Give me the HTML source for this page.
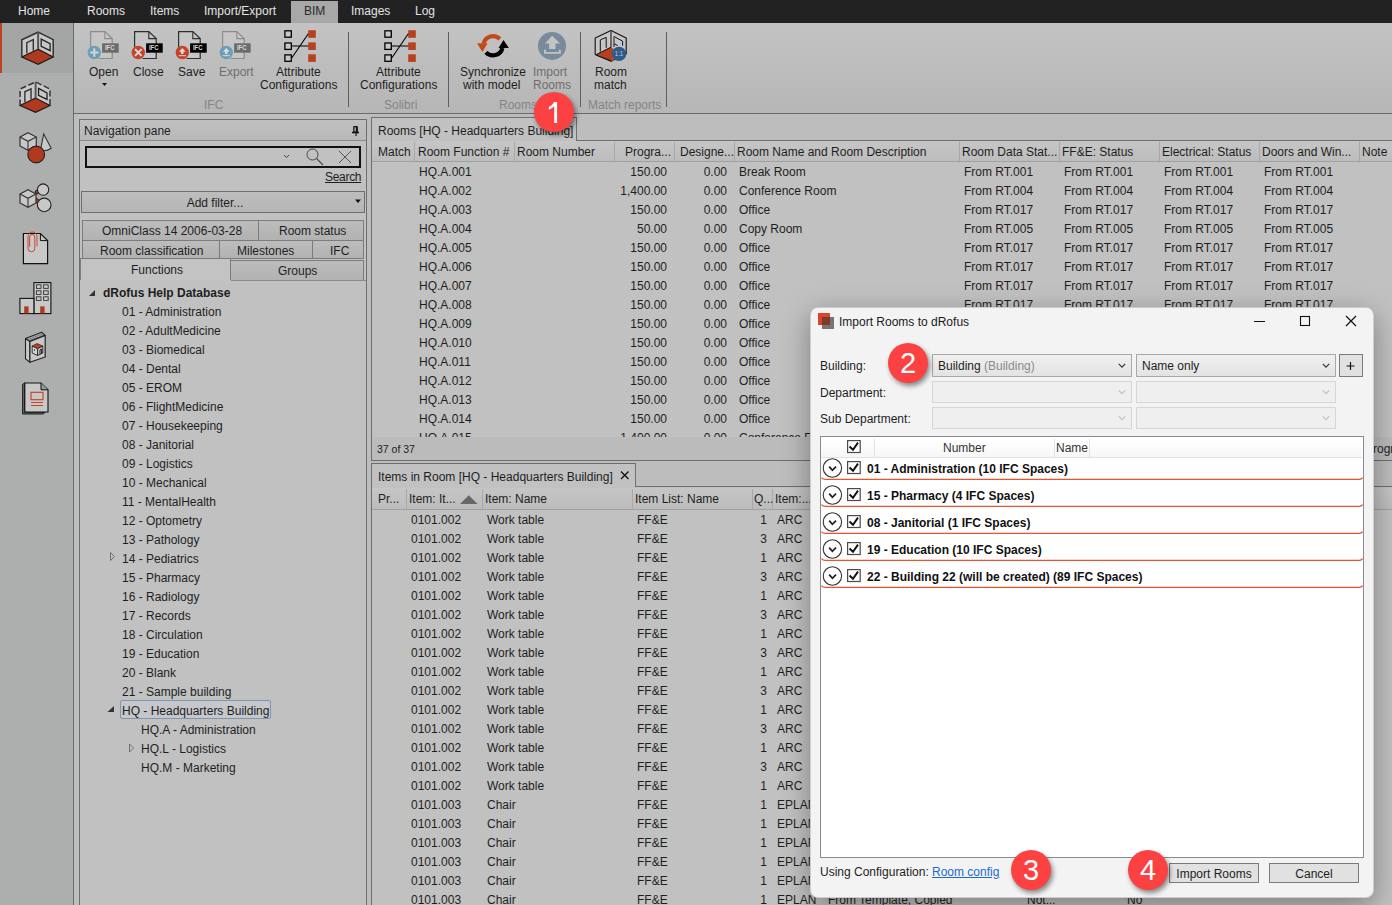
<!DOCTYPE html>
<html><head><meta charset="utf-8"><style>
*{margin:0;padding:0;box-sizing:border-box}
html,body{width:1392px;height:905px;overflow:hidden}
body{position:relative;background:#bdbdbd;font-family:"Liberation Sans",sans-serif;font-size:12px;color:#1e1e1e}
.a{position:absolute}
.t{position:absolute;white-space:nowrap;line-height:14px}
svg{position:absolute;overflow:visible}
</style></head>
<body>
<div class="a" style="left:0px;top:0px;width:1392px;height:23px;background:#222222"></div>
<div class="a" style="left:291px;top:1px;width:47px;height:22px;background:#a7a8a7"></div>
<div class="t" style="left:18px;top:4px;color:#e4e4e4;">Home</div>
<div class="t" style="left:87px;top:4px;color:#e4e4e4;">Rooms</div>
<div class="t" style="left:150px;top:4px;color:#e4e4e4;">Items</div>
<div class="t" style="left:204px;top:4px;color:#e4e4e4;">Import/Export</div>
<div class="t" style="left:351px;top:4px;color:#e4e4e4;">Images</div>
<div class="t" style="left:415px;top:4px;color:#e4e4e4;">Log</div>
<div class="t" style="left:304px;top:4px;color:#2a2a2a;">BIM</div>
<div class="a" style="left:0px;top:23px;width:73px;height:882px;background:#adaeae"></div>
<div class="a" style="left:0px;top:23px;width:73px;height:50px;background:#a4a5a5"></div>
<div class="a" style="left:0px;top:23px;width:2px;height:50px;background:#c0401f"></div>
<div class="a" style="left:73px;top:23px;width:1px;height:882px;background:#6a6a6a"></div>
<svg style="left:0;top:0" width="1" height="1"><path d="M38.10 32.20 L21.80 39.70 L21.80 57.00 L38.10 49.20 Z" fill="#c8c8c8"/><path d="M38.10 32.20 L53.20 39.70 L53.20 57.00 L38.10 49.20 Z" fill="#c8c8c8"/><path d="M38.10 49.20 L21.80 57.00 L38.10 64.30 L53.20 57.00 Z" fill="#b03a1e" stroke="#1a1a1a" stroke-width="1.2"/><path d="M21.80 57.00 V39.70 L38.10 32.20 L53.20 39.70 V57.00" stroke="#333" stroke-width="1.5" fill="none"/><path d="M38.10 32.20 V49.20" stroke="#555" stroke-width="2"/><path d="M26.80 53.50 V42.60 L33.30 39.50 V50.80" stroke="#333" stroke-width="1.4" fill="none"/><path d="M41.20 39.10 L50.10 43.70 L50.10 50.60 L41.20 46.40 Z" stroke="#222" stroke-width="1.3" fill="none"/><path d="M35.60 81.90 L20.12 89.03 L20.12 105.46 L35.60 98.05 Z" fill="#c8c8c8"/><path d="M35.60 81.90 L49.95 89.03 L49.95 105.46 L35.60 98.05 Z" fill="#c8c8c8"/><path d="M35.60 98.05 L20.12 105.46 L35.60 112.39 L49.95 105.46 Z" fill="#b03a1e" stroke="#1a1a1a" stroke-width="1.2"/><path d="M20.12 105.46 V89.03 L35.60 81.90 L49.95 89.03 V105.46" stroke="#333" stroke-width="1.5" fill="none" stroke-dasharray="6 2.5"/><path d="M35.60 81.90 V98.05" stroke="#555" stroke-width="2"/><path d="M24.87 102.14 V91.78 L31.04 88.84 V99.57" stroke="#333" stroke-width="1.4" fill="none"/><path d="M38.55 88.45 L47.00 92.83 L47.00 99.38 L38.55 95.39 Z" stroke="#222" stroke-width="1.3" fill="none"/><path d="M20 137 L28 132.6 L36.3 137 V146 L28 150.4 L20 146 Z" fill="#c8c8c8" stroke="#333" stroke-width="1.2"/><path d="M20 137 L28 141.3 L36.3 137 M28 141.3 V150.4" stroke="#333" stroke-width="1.1" fill="none"/><path d="M43.7 134 L51.2 148.3 Q46 152 40.5 150 Z" fill="#c8c8c8" stroke="#333" stroke-width="1.1"/><circle cx="36.2" cy="154.5" r="8.4" fill="#b03a1e" stroke="#222" stroke-width="1.1"/><path d="M37 192 L41.5 190 M34 199 L39.5 202.6" stroke="#1a1a1a" stroke-width="4.6" stroke-linecap="round"/><path d="M37 192 L41.5 190 M34 199 L39.5 202.6" stroke="#b03a1e" stroke-width="3" stroke-linecap="round"/><path d="M20 194 L28 189.6 L36 194 V203 L28 207.3 L20 203 Z" fill="#c8c8c8" stroke="#333" stroke-width="1.2"/><path d="M20 194 L28 198.3 L36 194 M28 198.3 V207.3" stroke="#333" stroke-width="1.1" fill="none"/><circle cx="43.1" cy="189.6" r="5.7" fill="#c8c8c8" stroke="#222" stroke-width="1.1"/><circle cx="44.2" cy="204.9" r="6.8" fill="#c8c8c8" stroke="#222" stroke-width="1.1"/><path d="M23.4 233.5 H40.4 L47.6 240.6 V263.6 H23.4 Z" fill="#c8c8c8" stroke="#111" stroke-width="1.2"/><path d="M40.4 233.5 V240.6 H47.6" stroke="#111" stroke-width="1" fill="none"/><path d="M29.6 246.8 V237 A2.6 2.6 0 0 1 34.8 237 V248.4 A3.4 3.4 0 0 1 28 248.4 V236.5 A4.5 4.5 0 0 1 37 236.5 V246.2" stroke="#c0401f" stroke-width="0.9" fill="none"/><rect x="33.9" y="282.6" width="17" height="31" fill="#c8c8c8" stroke="#111" stroke-width="1.1"/><rect x="19.9" y="298.4" width="14" height="15.2" fill="#c8c8c8" stroke="#111" stroke-width="1.1"/><rect x="36.4" y="284.8" width="4.6" height="3.6" fill="#c8c8c8" stroke="#333" stroke-width="0.9"/><rect x="43.6" y="284.8" width="4.6" height="3.6" fill="#c8c8c8" stroke="#333" stroke-width="0.9"/><rect x="36.4" y="290.8" width="4.6" height="3.6" fill="#c8c8c8" stroke="#333" stroke-width="0.9"/><rect x="43.6" y="290.8" width="4.6" height="3.6" fill="#c8c8c8" stroke="#333" stroke-width="0.9"/><rect x="36.4" y="296.8" width="4.6" height="3.6" fill="#c8c8c8" stroke="#333" stroke-width="0.9"/><rect x="43.6" y="296.8" width="4.6" height="3.6" fill="#c8c8c8" stroke="#333" stroke-width="0.9"/><rect x="24.2" y="306.4" width="4.4" height="7" fill="#b03a1e"/><rect x="40.2" y="306.4" width="4.4" height="7" fill="#b03a1e"/><path d="M25.5 338.5 L29.9 341.4 V362.2 L25.5 358.9 Z" fill="#c8c8c8" stroke="#222" stroke-width="1.1" stroke-linejoin="round"/><path d="M25.5 338.5 L41.6 332.2 L45.2 335.4 L29.9 341.4 Z" fill="#b0b0b0" stroke="#222" stroke-width="1.1" stroke-linejoin="round"/><path d="M27.3 339.7 L43 333.6 M28.6 340.6 L44.2 334.5" stroke="#333" stroke-width="0.6" stroke-dasharray="1.6 1.2"/><path d="M29.9 341.4 L45.2 335.4 V357 L29.9 362.2 Z" fill="#c8c8c8" stroke="#222" stroke-width="1.2" stroke-linejoin="round"/><path d="M32.2 346 L37.6 348.5 V355.5 L32.2 353 Z" fill="#d4d4d4" stroke="#222" stroke-width="0.9"/><path d="M37.6 348.5 L42.8 346 V353 L37.6 355.5 Z" fill="#c8c8c8" stroke="#222" stroke-width="0.9"/><path d="M32.2 346 L37 343.6 L42.8 346 L37.6 348.5 Z" fill="#c0401f" stroke="#222" stroke-width="0.7"/><path d="M40 354.2 V349.8 L41.6 349.1 V353.5" stroke="#111" stroke-width="0.9" fill="none"/><circle cx="34.6" cy="350" r="0.7" fill="#111"/><path d="M22.6 384.4 L24.6 383 V412.2 H45 L43.4 414 H22.6 Z" fill="#6a6a6a" stroke="#111" stroke-width="0.9"/><path d="M24.8 383 H41 L48 389.8 V412 H24.8 Z" fill="#c8c8c8" stroke="#111" stroke-width="1.1"/><path d="M41 383 V389.8 H48" stroke="#111" stroke-width="1" fill="#9a9a9a"/><rect x="31" y="392.3" width="12" height="7.4" stroke="#c8401f" stroke-width="1.1" fill="none"/><path d="M31 402.5 H43 M31 405.5 H43" stroke="#c8401f" stroke-width="1"/></svg>
<div class="a" style="left:74px;top:23px;width:1318px;height:90px;background:linear-gradient(#c3c3c3,#b6b6b6)"></div>
<div class="a" style="left:74px;top:113px;width:1318px;height:1px;background:#6b6b6b"></div>
<div class="a" style="left:348px;top:32px;width:1px;height:75px;background:#5e5e5e"></div>
<div class="a" style="left:448px;top:32px;width:1px;height:75px;background:#5e5e5e"></div>
<div class="a" style="left:580px;top:32px;width:1px;height:75px;background:#5e5e5e"></div>
<div class="a" style="left:666px;top:32px;width:1px;height:75px;background:#5e5e5e"></div>
<div class="t" style="left:89px;top:65px;color:#1e1e1e;">Open</div>
<div class="t" style="left:133px;top:65px;color:#1e1e1e;">Close</div>
<div class="t" style="left:178px;top:65px;color:#1e1e1e;">Save</div>
<div class="t" style="left:219px;top:65px;color:#6e6e6e;">Export</div>
<div class="t" style="left:276px;top:65px;color:#1e1e1e;">Attribute</div>
<div class="t" style="left:260px;top:78px;color:#1e1e1e;">Configurations</div>
<div class="t" style="left:376px;top:65px;color:#1e1e1e;">Attribute</div>
<div class="t" style="left:360px;top:78px;color:#1e1e1e;">Configurations</div>
<div class="t" style="left:460px;top:65px;color:#1e1e1e;">Synchronize</div>
<div class="t" style="left:463px;top:78px;color:#1e1e1e;">with model</div>
<div class="t" style="left:533px;top:65px;color:#6e6e6e;">Import</div>
<div class="t" style="left:533px;top:78px;color:#6e6e6e;">Rooms</div>
<div class="t" style="left:595px;top:65px;color:#1e1e1e;">Room</div>
<div class="t" style="left:594px;top:78px;color:#1e1e1e;">match</div>
<div class="t" style="left:204px;top:98px;color:#858585;">IFC</div>
<div class="t" style="left:384px;top:98px;color:#858585;">Solibri</div>
<div class="t" style="left:499px;top:98px;color:#858585;">Rooms</div>
<div class="t" style="left:588px;top:98px;color:#858585;">Match reports</div>
<svg style="left:0;top:0" width="1" height="1"><path d="M90.6 47 V31.6 H104.8 L112.19999999999999 38.6 V58.5 H98.6" stroke="#8c8c8c" stroke-width="1.2" fill="#c6c6c6"/><path d="M104.8 31.6 V38.6 H112.19999999999999" stroke="#8c8c8c" stroke-width="1.1" fill="none"/><rect x="102.1" y="43.3" width="16.6" height="9.4" fill="#6b6b6b"/><text x="104.89999999999999" y="50" font-family="Liberation Sans" font-weight="bold" font-size="6.6" fill="#d8d8d8" textLength="9.5" lengthAdjust="spacingAndGlyphs">IFC</text><circle cx="94.3" cy="52.5" r="6.7" fill="#6a9fb5"/><path d="M90.1 52.5 H98.5 M94.3 48.3 V56.7" stroke="#d5d5d5" stroke-width="2"/><path d="M134.6 47 V31.6 H148.79999999999998 L156.2 38.6 V58.5 H142.6" stroke="#2e2e2e" stroke-width="1.2" fill="#c6c6c6"/><path d="M148.79999999999998 31.6 V38.6 H156.2" stroke="#2e2e2e" stroke-width="1.1" fill="none"/><rect x="146.1" y="43.3" width="16.6" height="9.4" fill="#000"/><text x="148.9" y="50" font-family="Liberation Sans" font-weight="bold" font-size="6.6" fill="#d8d8d8" textLength="9.5" lengthAdjust="spacingAndGlyphs">IFC</text><circle cx="138.29999999999998" cy="52.5" r="6.7" fill="#c4432a"/><path d="M134.99999999999997 49.2 L141.6 55.8 M141.6 49.2 L134.99999999999997 55.8" stroke="#dcdcdc" stroke-width="1.9"/><path d="M178.6 47 V31.6 H192.79999999999998 L200.2 38.6 V58.5 H186.6" stroke="#2e2e2e" stroke-width="1.2" fill="#c6c6c6"/><path d="M192.79999999999998 31.6 V38.6 H200.2" stroke="#2e2e2e" stroke-width="1.1" fill="none"/><rect x="190.1" y="43.3" width="16.6" height="9.4" fill="#000"/><text x="192.9" y="50" font-family="Liberation Sans" font-weight="bold" font-size="6.6" fill="#d8d8d8" textLength="9.5" lengthAdjust="spacingAndGlyphs">IFC</text><circle cx="182.29999999999998" cy="52.5" r="6.7" fill="#c4432a"/><path d="M182.29999999999998 48.0 L185.6 51.7 H183.49999999999997 V54.1 H181.1 V51.7 H178.99999999999997 Z" fill="#dcdcdc"/><path d="M178.7 55.7 H185.89999999999998" stroke="#dcdcdc" stroke-width="1"/><path d="M222.6 47 V31.6 H236.79999999999998 L244.2 38.6 V58.5 H230.6" stroke="#8c8c8c" stroke-width="1.2" fill="#c6c6c6"/><path d="M236.79999999999998 31.6 V38.6 H244.2" stroke="#8c8c8c" stroke-width="1.1" fill="none"/><rect x="234.1" y="43.3" width="16.6" height="9.4" fill="#6b6b6b"/><text x="236.9" y="50" font-family="Liberation Sans" font-weight="bold" font-size="6.6" fill="#d8d8d8" textLength="9.5" lengthAdjust="spacingAndGlyphs">IFC</text><circle cx="226.29999999999998" cy="52.5" r="6.7" fill="#6a9fb5"/><path d="M226.29999999999998 48.0 L229.6 51.7 H227.49999999999997 V54.1 H225.1 V51.7 H222.99999999999997 Z" fill="#dcdcdc"/><path d="M222.7 55.7 H229.89999999999998" stroke="#dcdcdc" stroke-width="1"/><rect x="284.90000000000003" y="30.8" width="6.4" height="6.4" stroke="#000" stroke-width="1.3" fill="#c8c8c8"/><rect x="308.2" y="30.2" width="7.6" height="7.6" fill="#b7401f"/><rect x="284.90000000000003" y="43.0" width="6.4" height="6.4" stroke="#000" stroke-width="1.3" fill="#c8c8c8"/><rect x="308.2" y="42.4" width="7.6" height="7.6" fill="#b7401f"/><rect x="284.90000000000003" y="54.9" width="6.4" height="6.4" stroke="#000" stroke-width="1.3" fill="#c8c8c8"/><rect x="308.2" y="54.3" width="7.6" height="7.6" fill="#b7401f"/><path d="M291.90000000000003 46 H308.3 M291.90000000000003 57.8 L308.3 33.8" stroke="#000" stroke-width="1.1" fill="none"/><rect x="384.90000000000003" y="30.8" width="6.4" height="6.4" stroke="#000" stroke-width="1.3" fill="#c8c8c8"/><rect x="408.2" y="30.2" width="7.6" height="7.6" fill="#b7401f"/><rect x="384.90000000000003" y="43.0" width="6.4" height="6.4" stroke="#000" stroke-width="1.3" fill="#c8c8c8"/><rect x="408.2" y="42.4" width="7.6" height="7.6" fill="#b7401f"/><rect x="384.90000000000003" y="54.9" width="6.4" height="6.4" stroke="#000" stroke-width="1.3" fill="#c8c8c8"/><rect x="408.2" y="54.3" width="7.6" height="7.6" fill="#b7401f"/><path d="M391.90000000000003 46 H408.3 M391.90000000000003 57.8 L408.3 33.8" stroke="#000" stroke-width="1.1" fill="none"/><path d="M499.82 38.93 A9.65 9.65 0 0 0 483.64 43.42" stroke="#c04a1c" stroke-width="4.2" fill="none"/><path d="M477.1 43.2 L487.6 43.2 L482.4 51.9 Z" fill="#c04a1c"/><path d="M485.94 52.33 A9.65 9.65 0 0 0 502.40 47.92" stroke="#000" stroke-width="4.2" fill="none"/><path d="M498.5 48 L508.9 48 L503.5 39.9 Z" fill="#000"/><circle cx="552" cy="45.9" r="14" fill="#788b9c"/><path d="M552.1 35.8 L560.1 43.5 H555.5 V48.9 H549.1 V43.5 H544.9 Z" fill="#c3c3c3"/><path d="M545 49.7 V52.9 H559.9 V49.7" stroke="#c3c3c3" stroke-width="1.9" fill="none"/><path d="M611 30.5 L595.2 38 V54.5 L611 61.2 L626.2 54 V38 Z" fill="#c6c6c6" stroke="#111" stroke-width="1.1" stroke-linejoin="round"/><path d="M611 31 V47" stroke="#6a6a6a" stroke-width="2"/><path d="M596.3 54.6 L611 47 L613.5 49 L613.5 61 L611.5 61 Z" fill="#b7401f"/><path d="M596.3 54.6 L611 47.2 M596 55 L611.5 61" stroke="#111" stroke-width="1"/><path d="M600.3 51.5 V39.9 L606.2 37.3 V47.8" stroke="#111" stroke-width="1" fill="none"/><path d="M614 47 V36.5 L622.6 41.2 V45.7 M614 43.6 L617.7 45.5" stroke="#111" stroke-width="1" fill="none"/><path d="M614.1 36.8 V43.5" stroke="#777" stroke-width="1.5"/><circle cx="619" cy="53.9" r="7.2" fill="#2e5b87"/><text x="614.8" y="56.3" font-family="Liberation Sans" font-size="6.6" fill="#b9cfe0" textLength="8.4" lengthAdjust="spacingAndGlyphs">1:1</text></svg>
<svg style="left:0;top:0" width="1" height="1"><path d="M102 83 L107 83 L104.5 86 Z" fill="#111"/></svg>
<div class="a" style="left:79px;top:119px;width:288px;height:800px;background:#c1c1c1;border:1px solid #6e6e6e"></div>
<div class="a" style="left:80px;top:120px;width:286px;height:20px;background:linear-gradient(#c0c0c0,#b8b8b8)"></div>
<div class="a" style="left:80px;top:140px;width:286px;height:1px;background:#8a8a8a"></div>
<div class="t" style="left:84px;top:124px;">Navigation pane</div>
<svg style="left:0;top:0" width="1" height="1"><path d="M353.2 127 Q353.2 126 354.2 126 H356.9 Q357.9 126 357.9 127 V132 H353.2 Z" fill="#111"/><rect x="354.5" y="127.3" width="1.3" height="4.2" fill="#c4c4c4"/><rect x="352" y="131.8" width="7" height="1.5" fill="#111"/><rect x="355.5" y="133" width="1.1" height="3" fill="#111"/></svg>
<div class="a" style="left:85px;top:146px;width:276px;height:22px;border:2px solid #111"></div>
<svg style="left:0;top:0" width="1" height="1"><path d="M284 155 l2.5 2.5 l2.5 -2.5" stroke="#444" fill="none" stroke-width="1"/><circle cx="312.5" cy="154.5" r="5.5" stroke="#444" fill="none" stroke-width="1"/><path d="M316.5 158.5 L323 165" stroke="#444" stroke-width="1.1"/><path d="M339 151 L351 163 M351 151 L339 163" stroke="#555" stroke-width="1"/></svg>
<div class="t" style="left:325px;top:170px;color:#1e1e1e;text-decoration:underline;letter-spacing:-0.3px;">Search</div>
<div class="a" style="left:81px;top:191px;width:284px;height:22px;background:linear-gradient(#bdbdbd,#b5b5b5);border:1px solid #6e6e6e"></div>
<div class="t" style="left:15px;width:400px;text-align:center;top:196px;">Add filter...</div>
<svg style="left:0;top:0" width="1" height="1"><path d="M355 199.5 h6 l-3 3.5 z" fill="#111"/></svg>
<div class="a" style="left:82px;top:220px;width:177px;height:21px;background:linear-gradient(#bcbcbc,#b2b2b2);border:1px solid #7c7c7c;"></div><div class="t" style="left:102px;top:224px;">OmniClass 14 2006-03-28</div>
<div class="a" style="left:258px;top:220px;width:106px;height:21px;background:linear-gradient(#bcbcbc,#b2b2b2);border:1px solid #7c7c7c;"></div><div class="t" style="left:279px;top:224px;">Room status</div>
<div class="a" style="left:82px;top:240px;width:138px;height:19px;background:linear-gradient(#bcbcbc,#b2b2b2);border:1px solid #7c7c7c;"></div><div class="t" style="left:100px;top:244px;">Room classification</div>
<div class="a" style="left:219px;top:240px;width:94px;height:19px;background:linear-gradient(#bcbcbc,#b2b2b2);border:1px solid #7c7c7c;"></div><div class="t" style="left:237px;top:244px;">Milestones</div>
<div class="a" style="left:312px;top:240px;width:52px;height:19px;background:linear-gradient(#bcbcbc,#b2b2b2);border:1px solid #7c7c7c;"></div><div class="t" style="left:330px;top:244px;">IFC</div>
<div class="a" style="left:230px;top:260px;width:134px;height:21px;background:linear-gradient(#bcbcbc,#b2b2b2);border:1px solid #7c7c7c;"></div><div class="t" style="left:278px;top:264px;">Groups</div>
<div class="a" style="left:80px;top:258px;width:151px;height:23px;background:#c3c3c3;border:1px solid #7c7c7c;border-bottom:none"></div>
<div class="a" style="left:80px;top:280px;width:286px;height:1px;background:#c1c1c1"></div>
<div class="a" style="left:231px;top:280px;width:135px;height:1px;background:#8a8a8a"></div>
<div class="t" style="left:131px;top:263px;">Functions</div>
<div class="t" style="left:103px;top:286px;font-weight:bold;">dRofus Help Database</div>
<svg style="left:0;top:0" width="1" height="1"><path d="M89 296 L95 290 L95 296 Z" fill="#333"/></svg>
<div class="t" style="left:122px;top:305px;">01 - Administration</div>
<div class="t" style="left:122px;top:324px;">02 - AdultMedicine</div>
<div class="t" style="left:122px;top:343px;">03 - Biomedical</div>
<div class="t" style="left:122px;top:362px;">04 - Dental</div>
<div class="t" style="left:122px;top:381px;">05 - EROM</div>
<div class="t" style="left:122px;top:400px;">06 - FlightMedicine</div>
<div class="t" style="left:122px;top:419px;">07 - Housekeeping</div>
<div class="t" style="left:122px;top:438px;">08 - Janitorial</div>
<div class="t" style="left:122px;top:457px;">09 - Logistics</div>
<div class="t" style="left:122px;top:476px;">10 - Mechanical</div>
<div class="t" style="left:122px;top:495px;">11 - MentalHealth</div>
<div class="t" style="left:122px;top:514px;">12 - Optometry</div>
<div class="t" style="left:122px;top:533px;">13 - Pathology</div>
<div class="t" style="left:122px;top:552px;">14 - Pediatrics</div>
<div class="t" style="left:122px;top:571px;">15 - Pharmacy</div>
<div class="t" style="left:122px;top:590px;">16 - Radiology</div>
<div class="t" style="left:122px;top:609px;">17 - Records</div>
<div class="t" style="left:122px;top:628px;">18 - Circulation</div>
<div class="t" style="left:122px;top:647px;">19 - Education</div>
<div class="t" style="left:122px;top:666px;">20 - Blank</div>
<div class="t" style="left:122px;top:685px;">21 - Sample building</div>
<svg style="left:0;top:0" width="1" height="1"><path d="M110.5 552.5 L114.5 556.5 L110.5 560.5 Z" stroke="#666" fill="none" stroke-width="0.9"/></svg>
<div class="a" style="left:120px;top:700px;width:151px;height:19px;border:1px solid #7f95b2;border-radius:2px;background:#c5c7ca"></div>
<div class="t" style="left:122px;top:704px;">HQ - Headquarters Building</div>
<svg style="left:0;top:0" width="1" height="1"><path d="M107.5 712 L114 706 L114 712 Z" fill="#333"/></svg>
<div class="t" style="left:141px;top:723px;">HQ.A - Administration</div>
<div class="t" style="left:141px;top:742px;">HQ.L - Logistics</div>
<svg style="left:0;top:0" width="1" height="1"><path d="M129.5 744 L133.5 748 L129.5 752 Z" stroke="#666" fill="none" stroke-width="0.9"/></svg>
<div class="t" style="left:141px;top:761px;">HQ.M - Marketing</div>
<div class="a" style="left:371px;top:140px;width:1021px;height:321px;background:#c1c1c1;border-left:1px solid #6e6e6e;border-top:1px solid #6e6e6e;border-bottom:1px solid #6e6e6e"></div>
<div class="a" style="left:371px;top:117px;width:206px;height:24px;background:#c1c1c1;border:1px solid #6e6e6e;border-bottom:none"></div>
<div class="a" style="left:372px;top:140px;width:204px;height:1px;background:#c1c1c1"></div>
<div class="t" style="left:378px;top:124px;">Rooms [HQ - Headquarters Building]</div>
<div class="a" style="left:372px;top:141px;width:1020px;height:21px;background:linear-gradient(#c6c6c6,#bcbcbc);border-bottom:1px solid #a0a0a0"></div>
<div class="a" style="left:414px;top:142px;width:1px;height:19px;background:#a9a9a9"></div>
<div class="a" style="left:514px;top:142px;width:1px;height:19px;background:#a9a9a9"></div>
<div class="a" style="left:614px;top:142px;width:1px;height:19px;background:#a9a9a9"></div>
<div class="a" style="left:674px;top:142px;width:1px;height:19px;background:#a9a9a9"></div>
<div class="a" style="left:734px;top:142px;width:1px;height:19px;background:#a9a9a9"></div>
<div class="a" style="left:959px;top:142px;width:1px;height:19px;background:#a9a9a9"></div>
<div class="a" style="left:1059px;top:142px;width:1px;height:19px;background:#a9a9a9"></div>
<div class="a" style="left:1159px;top:142px;width:1px;height:19px;background:#a9a9a9"></div>
<div class="a" style="left:1259px;top:142px;width:1px;height:19px;background:#a9a9a9"></div>
<div class="a" style="left:1359px;top:142px;width:1px;height:19px;background:#a9a9a9"></div>
<div class="t" style="left:378px;top:145px;">Match</div>
<div class="t" style="left:418px;top:145px;">Room Function #</div>
<div class="t" style="left:517px;top:145px;">Room Number</div>
<div class="t" style="right:721px;top:145px;">Progra...</div>
<div class="t" style="left:680px;top:145px;">Designe...</div>
<div class="t" style="left:737px;top:145px;">Room Name and Room Description</div>
<div class="t" style="left:962px;top:145px;">Room Data Stat...</div>
<div class="t" style="left:1062px;top:145px;">FF&amp;E: Status</div>
<div class="t" style="left:1162px;top:145px;">Electrical: Status</div>
<div class="t" style="left:1262px;top:145px;">Doors and Win...</div>
<div class="t" style="left:1362px;top:145px;">Note</div>
<div class="a" style="left:372px;top:162px;width:1020px;height:275px;overflow:hidden"><div class="a" style="left:-372px;top:-162px;width:1392px;height:905px"><div class="t" style="left:419px;top:165px;">HQ.A.001</div><div class="t" style="right:725px;top:165px;">150.00</div><div class="t" style="right:665px;top:165px;">0.00</div><div class="t" style="left:739px;top:165px;">Break Room</div><div class="t" style="left:964px;top:165px;">From RT.001</div><div class="t" style="left:1064px;top:165px;">From RT.001</div><div class="t" style="left:1164px;top:165px;">From RT.001</div><div class="t" style="left:1264px;top:165px;">From RT.001</div><div class="t" style="left:419px;top:184px;">HQ.A.002</div><div class="t" style="right:725px;top:184px;">1,400.00</div><div class="t" style="right:665px;top:184px;">0.00</div><div class="t" style="left:739px;top:184px;">Conference Room</div><div class="t" style="left:964px;top:184px;">From RT.004</div><div class="t" style="left:1064px;top:184px;">From RT.004</div><div class="t" style="left:1164px;top:184px;">From RT.004</div><div class="t" style="left:1264px;top:184px;">From RT.004</div><div class="t" style="left:419px;top:203px;">HQ.A.003</div><div class="t" style="right:725px;top:203px;">150.00</div><div class="t" style="right:665px;top:203px;">0.00</div><div class="t" style="left:739px;top:203px;">Office</div><div class="t" style="left:964px;top:203px;">From RT.017</div><div class="t" style="left:1064px;top:203px;">From RT.017</div><div class="t" style="left:1164px;top:203px;">From RT.017</div><div class="t" style="left:1264px;top:203px;">From RT.017</div><div class="t" style="left:419px;top:222px;">HQ.A.004</div><div class="t" style="right:725px;top:222px;">50.00</div><div class="t" style="right:665px;top:222px;">0.00</div><div class="t" style="left:739px;top:222px;">Copy Room</div><div class="t" style="left:964px;top:222px;">From RT.005</div><div class="t" style="left:1064px;top:222px;">From RT.005</div><div class="t" style="left:1164px;top:222px;">From RT.005</div><div class="t" style="left:1264px;top:222px;">From RT.005</div><div class="t" style="left:419px;top:241px;">HQ.A.005</div><div class="t" style="right:725px;top:241px;">150.00</div><div class="t" style="right:665px;top:241px;">0.00</div><div class="t" style="left:739px;top:241px;">Office</div><div class="t" style="left:964px;top:241px;">From RT.017</div><div class="t" style="left:1064px;top:241px;">From RT.017</div><div class="t" style="left:1164px;top:241px;">From RT.017</div><div class="t" style="left:1264px;top:241px;">From RT.017</div><div class="t" style="left:419px;top:260px;">HQ.A.006</div><div class="t" style="right:725px;top:260px;">150.00</div><div class="t" style="right:665px;top:260px;">0.00</div><div class="t" style="left:739px;top:260px;">Office</div><div class="t" style="left:964px;top:260px;">From RT.017</div><div class="t" style="left:1064px;top:260px;">From RT.017</div><div class="t" style="left:1164px;top:260px;">From RT.017</div><div class="t" style="left:1264px;top:260px;">From RT.017</div><div class="t" style="left:419px;top:279px;">HQ.A.007</div><div class="t" style="right:725px;top:279px;">150.00</div><div class="t" style="right:665px;top:279px;">0.00</div><div class="t" style="left:739px;top:279px;">Office</div><div class="t" style="left:964px;top:279px;">From RT.017</div><div class="t" style="left:1064px;top:279px;">From RT.017</div><div class="t" style="left:1164px;top:279px;">From RT.017</div><div class="t" style="left:1264px;top:279px;">From RT.017</div><div class="t" style="left:419px;top:298px;">HQ.A.008</div><div class="t" style="right:725px;top:298px;">150.00</div><div class="t" style="right:665px;top:298px;">0.00</div><div class="t" style="left:739px;top:298px;">Office</div><div class="t" style="left:964px;top:298px;">From RT.017</div><div class="t" style="left:1064px;top:298px;">From RT.017</div><div class="t" style="left:1164px;top:298px;">From RT.017</div><div class="t" style="left:1264px;top:298px;">From RT.017</div><div class="t" style="left:419px;top:317px;">HQ.A.009</div><div class="t" style="right:725px;top:317px;">150.00</div><div class="t" style="right:665px;top:317px;">0.00</div><div class="t" style="left:739px;top:317px;">Office</div><div class="t" style="left:964px;top:317px;">From RT.017</div><div class="t" style="left:1064px;top:317px;">From RT.017</div><div class="t" style="left:1164px;top:317px;">From RT.017</div><div class="t" style="left:1264px;top:317px;">From RT.017</div><div class="t" style="left:419px;top:336px;">HQ.A.010</div><div class="t" style="right:725px;top:336px;">150.00</div><div class="t" style="right:665px;top:336px;">0.00</div><div class="t" style="left:739px;top:336px;">Office</div><div class="t" style="left:964px;top:336px;">From RT.017</div><div class="t" style="left:1064px;top:336px;">From RT.017</div><div class="t" style="left:1164px;top:336px;">From RT.017</div><div class="t" style="left:1264px;top:336px;">From RT.017</div><div class="t" style="left:419px;top:355px;">HQ.A.011</div><div class="t" style="right:725px;top:355px;">150.00</div><div class="t" style="right:665px;top:355px;">0.00</div><div class="t" style="left:739px;top:355px;">Office</div><div class="t" style="left:964px;top:355px;">From RT.017</div><div class="t" style="left:1064px;top:355px;">From RT.017</div><div class="t" style="left:1164px;top:355px;">From RT.017</div><div class="t" style="left:1264px;top:355px;">From RT.017</div><div class="t" style="left:419px;top:374px;">HQ.A.012</div><div class="t" style="right:725px;top:374px;">150.00</div><div class="t" style="right:665px;top:374px;">0.00</div><div class="t" style="left:739px;top:374px;">Office</div><div class="t" style="left:964px;top:374px;">From RT.017</div><div class="t" style="left:1064px;top:374px;">From RT.017</div><div class="t" style="left:1164px;top:374px;">From RT.017</div><div class="t" style="left:1264px;top:374px;">From RT.017</div><div class="t" style="left:419px;top:393px;">HQ.A.013</div><div class="t" style="right:725px;top:393px;">150.00</div><div class="t" style="right:665px;top:393px;">0.00</div><div class="t" style="left:739px;top:393px;">Office</div><div class="t" style="left:964px;top:393px;">From RT.017</div><div class="t" style="left:1064px;top:393px;">From RT.017</div><div class="t" style="left:1164px;top:393px;">From RT.017</div><div class="t" style="left:1264px;top:393px;">From RT.017</div><div class="t" style="left:419px;top:412px;">HQ.A.014</div><div class="t" style="right:725px;top:412px;">150.00</div><div class="t" style="right:665px;top:412px;">0.00</div><div class="t" style="left:739px;top:412px;">Office</div><div class="t" style="left:964px;top:412px;">From RT.017</div><div class="t" style="left:1064px;top:412px;">From RT.017</div><div class="t" style="left:1164px;top:412px;">From RT.017</div><div class="t" style="left:1264px;top:412px;">From RT.017</div><div class="t" style="left:419px;top:431px;">HQ.A.015</div><div class="t" style="right:725px;top:431px;">1,400.00</div><div class="t" style="right:665px;top:431px;">0.00</div><div class="t" style="left:739px;top:431px;">Conference Room</div><div class="t" style="left:964px;top:431px;">From RT.004</div><div class="t" style="left:1064px;top:431px;">From RT.004</div><div class="t" style="left:1164px;top:431px;">From RT.004</div><div class="t" style="left:1264px;top:431px;">From RT.004</div></div></div>
<div class="a" style="left:372px;top:437px;width:1020px;height:23px;background:#bbbbbb"></div>
<div class="t" style="left:377px;top:442px;font-size:10.5px">37 of 37</div>
<div class="t" style="left:1365px;top:442px;">Progra</div>
<div class="a" style="left:371px;top:486px;width:1021px;height:430px;background:#c1c1c1;border-left:1px solid #6e6e6e;border-top:1px solid #6e6e6e"></div>
<div class="a" style="left:371px;top:463px;width:265px;height:24px;background:#c1c1c1;border:1px solid #6e6e6e;border-bottom:none"></div>
<div class="a" style="left:372px;top:486px;width:263px;height:1px;background:#c1c1c1"></div>
<div class="t" style="left:378px;top:470px;">Items in Room [HQ - Headquarters Building]</div>
<svg style="left:0;top:0" width="1" height="1"><path d="M621 471.5 L628.5 479 M628.5 471.5 L621 479" stroke="#111" stroke-width="1.3"/></svg>
<div class="a" style="left:372px;top:488px;width:1020px;height:22px;background:linear-gradient(#c6c6c6,#bcbcbc);border-bottom:1px solid #a0a0a0"></div>
<div class="a" style="left:406px;top:489px;width:1px;height:20px;background:#a9a9a9"></div>
<div class="a" style="left:482px;top:489px;width:1px;height:20px;background:#a9a9a9"></div>
<div class="a" style="left:632px;top:489px;width:1px;height:20px;background:#a9a9a9"></div>
<div class="a" style="left:752px;top:489px;width:1px;height:20px;background:#a9a9a9"></div>
<div class="a" style="left:772px;top:489px;width:1px;height:20px;background:#a9a9a9"></div>
<div class="a" style="left:826px;top:489px;width:1px;height:20px;background:#a9a9a9"></div>
<div class="a" style="left:1026px;top:489px;width:1px;height:20px;background:#a9a9a9"></div>
<div class="a" style="left:1126px;top:489px;width:1px;height:20px;background:#a9a9a9"></div>
<div class="t" style="left:378px;top:492px;">Pr...</div>
<div class="t" style="left:409px;top:492px;">Item: It...</div>
<div class="t" style="left:485px;top:492px;">Item: Name</div>
<div class="t" style="left:635px;top:492px;">Item List: Name</div>
<div class="t" style="left:754px;top:492px;">Q...</div>
<div class="t" style="left:775px;top:492px;">Item:...</div>
<svg style="left:0;top:0" width="1" height="1"><path d="M460 504 L468.8 495.3 L477.6 504 Z" fill="#686868"/></svg>
<div class="a" style="left:372px;top:510px;width:1020px;height:395px;overflow:hidden"><div class="a" style="left:-372px;top:-510px;width:1392px;height:905px"><div class="t" style="left:411px;top:513px;">0101.002</div><div class="t" style="left:487px;top:513px;">Work table</div><div class="t" style="left:637px;top:513px;">FF&amp;E</div><div class="t" style="right:625px;top:513px;">1</div><div class="t" style="left:777px;top:513px;">ARC</div><div class="t" style="left:828px;top:513px;">From Template, Copied</div><div class="t" style="left:1027px;top:513px;">Not...</div><div class="t" style="left:1127px;top:513px;">No</div><div class="t" style="left:411px;top:532px;">0101.002</div><div class="t" style="left:487px;top:532px;">Work table</div><div class="t" style="left:637px;top:532px;">FF&amp;E</div><div class="t" style="right:625px;top:532px;">3</div><div class="t" style="left:777px;top:532px;">ARC</div><div class="t" style="left:828px;top:532px;">From Template, Copied</div><div class="t" style="left:1027px;top:532px;">Not...</div><div class="t" style="left:1127px;top:532px;">No</div><div class="t" style="left:411px;top:551px;">0101.002</div><div class="t" style="left:487px;top:551px;">Work table</div><div class="t" style="left:637px;top:551px;">FF&amp;E</div><div class="t" style="right:625px;top:551px;">1</div><div class="t" style="left:777px;top:551px;">ARC</div><div class="t" style="left:828px;top:551px;">From Template, Copied</div><div class="t" style="left:1027px;top:551px;">Not...</div><div class="t" style="left:1127px;top:551px;">No</div><div class="t" style="left:411px;top:570px;">0101.002</div><div class="t" style="left:487px;top:570px;">Work table</div><div class="t" style="left:637px;top:570px;">FF&amp;E</div><div class="t" style="right:625px;top:570px;">3</div><div class="t" style="left:777px;top:570px;">ARC</div><div class="t" style="left:828px;top:570px;">From Template, Copied</div><div class="t" style="left:1027px;top:570px;">Not...</div><div class="t" style="left:1127px;top:570px;">No</div><div class="t" style="left:411px;top:589px;">0101.002</div><div class="t" style="left:487px;top:589px;">Work table</div><div class="t" style="left:637px;top:589px;">FF&amp;E</div><div class="t" style="right:625px;top:589px;">1</div><div class="t" style="left:777px;top:589px;">ARC</div><div class="t" style="left:828px;top:589px;">From Template, Copied</div><div class="t" style="left:1027px;top:589px;">Not...</div><div class="t" style="left:1127px;top:589px;">No</div><div class="t" style="left:411px;top:608px;">0101.002</div><div class="t" style="left:487px;top:608px;">Work table</div><div class="t" style="left:637px;top:608px;">FF&amp;E</div><div class="t" style="right:625px;top:608px;">3</div><div class="t" style="left:777px;top:608px;">ARC</div><div class="t" style="left:828px;top:608px;">From Template, Copied</div><div class="t" style="left:1027px;top:608px;">Not...</div><div class="t" style="left:1127px;top:608px;">No</div><div class="t" style="left:411px;top:627px;">0101.002</div><div class="t" style="left:487px;top:627px;">Work table</div><div class="t" style="left:637px;top:627px;">FF&amp;E</div><div class="t" style="right:625px;top:627px;">1</div><div class="t" style="left:777px;top:627px;">ARC</div><div class="t" style="left:828px;top:627px;">From Template, Copied</div><div class="t" style="left:1027px;top:627px;">Not...</div><div class="t" style="left:1127px;top:627px;">No</div><div class="t" style="left:411px;top:646px;">0101.002</div><div class="t" style="left:487px;top:646px;">Work table</div><div class="t" style="left:637px;top:646px;">FF&amp;E</div><div class="t" style="right:625px;top:646px;">3</div><div class="t" style="left:777px;top:646px;">ARC</div><div class="t" style="left:828px;top:646px;">From Template, Copied</div><div class="t" style="left:1027px;top:646px;">Not...</div><div class="t" style="left:1127px;top:646px;">No</div><div class="t" style="left:411px;top:665px;">0101.002</div><div class="t" style="left:487px;top:665px;">Work table</div><div class="t" style="left:637px;top:665px;">FF&amp;E</div><div class="t" style="right:625px;top:665px;">1</div><div class="t" style="left:777px;top:665px;">ARC</div><div class="t" style="left:828px;top:665px;">From Template, Copied</div><div class="t" style="left:1027px;top:665px;">Not...</div><div class="t" style="left:1127px;top:665px;">No</div><div class="t" style="left:411px;top:684px;">0101.002</div><div class="t" style="left:487px;top:684px;">Work table</div><div class="t" style="left:637px;top:684px;">FF&amp;E</div><div class="t" style="right:625px;top:684px;">3</div><div class="t" style="left:777px;top:684px;">ARC</div><div class="t" style="left:828px;top:684px;">From Template, Copied</div><div class="t" style="left:1027px;top:684px;">Not...</div><div class="t" style="left:1127px;top:684px;">No</div><div class="t" style="left:411px;top:703px;">0101.002</div><div class="t" style="left:487px;top:703px;">Work table</div><div class="t" style="left:637px;top:703px;">FF&amp;E</div><div class="t" style="right:625px;top:703px;">1</div><div class="t" style="left:777px;top:703px;">ARC</div><div class="t" style="left:828px;top:703px;">From Template, Copied</div><div class="t" style="left:1027px;top:703px;">Not...</div><div class="t" style="left:1127px;top:703px;">No</div><div class="t" style="left:411px;top:722px;">0101.002</div><div class="t" style="left:487px;top:722px;">Work table</div><div class="t" style="left:637px;top:722px;">FF&amp;E</div><div class="t" style="right:625px;top:722px;">3</div><div class="t" style="left:777px;top:722px;">ARC</div><div class="t" style="left:828px;top:722px;">From Template, Copied</div><div class="t" style="left:1027px;top:722px;">Not...</div><div class="t" style="left:1127px;top:722px;">No</div><div class="t" style="left:411px;top:741px;">0101.002</div><div class="t" style="left:487px;top:741px;">Work table</div><div class="t" style="left:637px;top:741px;">FF&amp;E</div><div class="t" style="right:625px;top:741px;">1</div><div class="t" style="left:777px;top:741px;">ARC</div><div class="t" style="left:828px;top:741px;">From Template, Copied</div><div class="t" style="left:1027px;top:741px;">Not...</div><div class="t" style="left:1127px;top:741px;">No</div><div class="t" style="left:411px;top:760px;">0101.002</div><div class="t" style="left:487px;top:760px;">Work table</div><div class="t" style="left:637px;top:760px;">FF&amp;E</div><div class="t" style="right:625px;top:760px;">3</div><div class="t" style="left:777px;top:760px;">ARC</div><div class="t" style="left:828px;top:760px;">From Template, Copied</div><div class="t" style="left:1027px;top:760px;">Not...</div><div class="t" style="left:1127px;top:760px;">No</div><div class="t" style="left:411px;top:779px;">0101.002</div><div class="t" style="left:487px;top:779px;">Work table</div><div class="t" style="left:637px;top:779px;">FF&amp;E</div><div class="t" style="right:625px;top:779px;">1</div><div class="t" style="left:777px;top:779px;">ARC</div><div class="t" style="left:828px;top:779px;">From Template, Copied</div><div class="t" style="left:1027px;top:779px;">Not...</div><div class="t" style="left:1127px;top:779px;">No</div><div class="t" style="left:411px;top:798px;">0101.003</div><div class="t" style="left:487px;top:798px;">Chair</div><div class="t" style="left:637px;top:798px;">FF&amp;E</div><div class="t" style="right:625px;top:798px;">1</div><div class="t" style="left:777px;top:798px;">EPLAN</div><div class="t" style="left:828px;top:798px;">From Template, Copied</div><div class="t" style="left:1027px;top:798px;">Not...</div><div class="t" style="left:1127px;top:798px;">No</div><div class="t" style="left:411px;top:817px;">0101.003</div><div class="t" style="left:487px;top:817px;">Chair</div><div class="t" style="left:637px;top:817px;">FF&amp;E</div><div class="t" style="right:625px;top:817px;">1</div><div class="t" style="left:777px;top:817px;">EPLAN</div><div class="t" style="left:828px;top:817px;">From Template, Copied</div><div class="t" style="left:1027px;top:817px;">Not...</div><div class="t" style="left:1127px;top:817px;">No</div><div class="t" style="left:411px;top:836px;">0101.003</div><div class="t" style="left:487px;top:836px;">Chair</div><div class="t" style="left:637px;top:836px;">FF&amp;E</div><div class="t" style="right:625px;top:836px;">1</div><div class="t" style="left:777px;top:836px;">EPLAN</div><div class="t" style="left:828px;top:836px;">From Template, Copied</div><div class="t" style="left:1027px;top:836px;">Not...</div><div class="t" style="left:1127px;top:836px;">No</div><div class="t" style="left:411px;top:855px;">0101.003</div><div class="t" style="left:487px;top:855px;">Chair</div><div class="t" style="left:637px;top:855px;">FF&amp;E</div><div class="t" style="right:625px;top:855px;">1</div><div class="t" style="left:777px;top:855px;">EPLAN</div><div class="t" style="left:828px;top:855px;">From Template, Copied</div><div class="t" style="left:1027px;top:855px;">Not...</div><div class="t" style="left:1127px;top:855px;">No</div><div class="t" style="left:411px;top:874px;">0101.003</div><div class="t" style="left:487px;top:874px;">Chair</div><div class="t" style="left:637px;top:874px;">FF&amp;E</div><div class="t" style="right:625px;top:874px;">1</div><div class="t" style="left:777px;top:874px;">EPLAN</div><div class="t" style="left:828px;top:874px;">From Template, Copied</div><div class="t" style="left:1027px;top:874px;">Not...</div><div class="t" style="left:1127px;top:874px;">No</div><div class="t" style="left:411px;top:893px;">0101.003</div><div class="t" style="left:487px;top:893px;">Chair</div><div class="t" style="left:637px;top:893px;">FF&amp;E</div><div class="t" style="right:625px;top:893px;">1</div><div class="t" style="left:777px;top:893px;">EPLAN</div><div class="t" style="left:828px;top:893px;">From Template, Copied</div><div class="t" style="left:1027px;top:893px;">Not...</div><div class="t" style="left:1127px;top:893px;">No</div></div></div>
<div class="a" style="left:810px;top:307px;width:564px;height:591px;border-radius:8px;background:#f3f3f3;border:1px solid #cdcdcd;box-shadow:0 8px 28px rgba(0,0,0,0.35)"></div>
<svg style="left:0;top:0" width="1" height="1"><rect x="818" y="313" width="12" height="12" fill="#d9452a"/><rect x="822" y="317" width="12" height="12" fill="#7a7574"/><path d="M822 317 h8 v8 h-8 z" fill="#7a3a2c"/></svg>
<div class="t" style="left:839px;top:315px;color:#1a1a1a;">Import Rooms to dRofus</div>
<svg style="left:0;top:0" width="1" height="1"><path d="M1254 321.5 h11" stroke="#111" stroke-width="1"/><rect x="1300.5" y="316.5" width="9" height="9" stroke="#111" fill="none" stroke-width="1.1"/><path d="M1346 316 L1356 326 M1356 316 L1346 326" stroke="#111" stroke-width="1.2"/></svg>
<div class="t" style="left:820px;top:359px;">Building:</div>
<div class="t" style="left:820px;top:386px;">Department:</div>
<div class="t" style="left:820px;top:412px;">Sub Department:</div>
<div class="a" style="left:932px;top:354px;width:200px;height:23px;background:linear-gradient(#f0f0f0,#e3e3e3);border:1px solid #a8a8a8"></div><svg style="left:0;top:0" width="1" height="1"><path d="M1118.8 363.9 L1122 367.1 L1125.2 363.9" stroke="#333" fill="none" stroke-width="1.2"/></svg><div class="t" style="left:938px;top:359px;">Building <span style="color:#8a8a8a">(Building)</span></div>
<div class="a" style="left:1136px;top:354px;width:200px;height:23px;background:linear-gradient(#f0f0f0,#e3e3e3);border:1px solid #a8a8a8"></div><svg style="left:0;top:0" width="1" height="1"><path d="M1322.8 363.9 L1326 367.1 L1329.2 363.9" stroke="#333" fill="none" stroke-width="1.2"/></svg><div class="t" style="left:1142px;top:359px;">Name only</div>
<div class="a" style="left:1339px;top:354px;width:24px;height:23px;background:#e1e1e1;border:1px solid #7a7a7a"></div>
<svg style="left:0;top:0" width="1" height="1"><path d="M1346.5 366 h8 M1350.5 362 v8" stroke="#111" stroke-width="1.2"/></svg>
<div class="a" style="left:932px;top:381px;width:200px;height:22px;background:#efefef;border:1px solid #d6d6d6"></div><svg style="left:0;top:0" width="1" height="1"><path d="M1118.8 390.4 L1122 393.6 L1125.2 390.4" stroke="#c2c2c2" fill="none" stroke-width="1.2"/></svg>
<div class="a" style="left:1136px;top:381px;width:200px;height:22px;background:#efefef;border:1px solid #d6d6d6"></div><svg style="left:0;top:0" width="1" height="1"><path d="M1322.8 390.4 L1326 393.6 L1329.2 390.4" stroke="#c2c2c2" fill="none" stroke-width="1.2"/></svg>
<div class="a" style="left:932px;top:407px;width:200px;height:22px;background:#efefef;border:1px solid #d6d6d6"></div><svg style="left:0;top:0" width="1" height="1"><path d="M1118.8 416.4 L1122 419.6 L1125.2 416.4" stroke="#c2c2c2" fill="none" stroke-width="1.2"/></svg>
<div class="a" style="left:1136px;top:407px;width:200px;height:22px;background:#efefef;border:1px solid #d6d6d6"></div><svg style="left:0;top:0" width="1" height="1"><path d="M1322.8 416.4 L1326 419.6 L1329.2 416.4" stroke="#c2c2c2" fill="none" stroke-width="1.2"/></svg>
<div class="a" style="left:820px;top:436px;width:544px;height:422px;background:#fff;border:1px solid #858b95"></div>
<div class="a" style="left:821px;top:439px;width:541px;height:19px;background:linear-gradient(#ffffff,#f6f6f6);border-bottom:1px solid #e2e2e2"></div>
<div class="a" style="left:874px;top:439px;width:1px;height:18px;background:#e2e2e2"></div>
<div class="a" style="left:1054px;top:439px;width:1px;height:18px;background:#e2e2e2"></div>
<div class="a" style="left:1089px;top:439px;width:1px;height:18px;background:#e2e2e2"></div>
<div class="t" style="left:943px;top:441px;color:#333;">Number</div>
<div class="t" style="left:1056px;top:441px;color:#333;">Name</div>
<svg style="left:0;top:0" width="1" height="1"><rect x="847.6" y="440.6" width="12.6" height="11.9" stroke="#4a4a4a" fill="#fff" stroke-width="1.2"/><path d="M849.5 446.5 L853 449.8 L858 442.6" stroke="#111" fill="none" stroke-width="1.9"/></svg>
<svg style="left:0;top:0" width="1" height="1"><circle cx="832.4" cy="468" r="9.2" stroke="#333" fill="#fff" stroke-width="1.1"/><path d="M829.2 466.7 L832.4 470.3 L836 466.7" stroke="#222" fill="none" stroke-width="1.8"/></svg>
<svg style="left:0;top:0" width="1" height="1"><rect x="847.6" y="461.6" width="12.6" height="11.9" stroke="#4a4a4a" fill="#fff" stroke-width="1.2"/><path d="M849.5 467.5 L853 470.8 L858 463.6" stroke="#111" fill="none" stroke-width="1.9"/></svg>
<div class="t" style="left:867px;top:462px;color:#111;font-weight:bold;">01 - Administration (10 IFC Spaces)</div>
<svg style="left:0;top:0" width="1" height="1"><path d="M821.5 477.6 Q823 479.4 825 479.4 H1359.5 Q1361.5 479.4 1362.5 477.6" stroke="#e8542e" fill="none" stroke-width="1.3"/></svg>
<svg style="left:0;top:0" width="1" height="1"><circle cx="832.4" cy="495" r="9.2" stroke="#333" fill="#fff" stroke-width="1.1"/><path d="M829.2 493.7 L832.4 497.3 L836 493.7" stroke="#222" fill="none" stroke-width="1.8"/></svg>
<svg style="left:0;top:0" width="1" height="1"><rect x="847.6" y="488.6" width="12.6" height="11.9" stroke="#4a4a4a" fill="#fff" stroke-width="1.2"/><path d="M849.5 494.5 L853 497.8 L858 490.6" stroke="#111" fill="none" stroke-width="1.9"/></svg>
<div class="t" style="left:867px;top:489px;color:#111;font-weight:bold;">15 - Pharmacy (4 IFC Spaces)</div>
<svg style="left:0;top:0" width="1" height="1"><path d="M821.5 504.6 Q823 506.4 825 506.4 H1359.5 Q1361.5 506.4 1362.5 504.6" stroke="#e8542e" fill="none" stroke-width="1.3"/></svg>
<svg style="left:0;top:0" width="1" height="1"><circle cx="832.4" cy="522" r="9.2" stroke="#333" fill="#fff" stroke-width="1.1"/><path d="M829.2 520.7 L832.4 524.3 L836 520.7" stroke="#222" fill="none" stroke-width="1.8"/></svg>
<svg style="left:0;top:0" width="1" height="1"><rect x="847.6" y="515.6" width="12.6" height="11.9" stroke="#4a4a4a" fill="#fff" stroke-width="1.2"/><path d="M849.5 521.5 L853 524.8 L858 517.6" stroke="#111" fill="none" stroke-width="1.9"/></svg>
<div class="t" style="left:867px;top:516px;color:#111;font-weight:bold;">08 - Janitorial (1 IFC Spaces)</div>
<svg style="left:0;top:0" width="1" height="1"><path d="M821.5 531.6 Q823 533.4 825 533.4 H1359.5 Q1361.5 533.4 1362.5 531.6" stroke="#e8542e" fill="none" stroke-width="1.3"/></svg>
<svg style="left:0;top:0" width="1" height="1"><circle cx="832.4" cy="549" r="9.2" stroke="#333" fill="#fff" stroke-width="1.1"/><path d="M829.2 547.7 L832.4 551.3 L836 547.7" stroke="#222" fill="none" stroke-width="1.8"/></svg>
<svg style="left:0;top:0" width="1" height="1"><rect x="847.6" y="542.6" width="12.6" height="11.9" stroke="#4a4a4a" fill="#fff" stroke-width="1.2"/><path d="M849.5 548.5 L853 551.8 L858 544.6" stroke="#111" fill="none" stroke-width="1.9"/></svg>
<div class="t" style="left:867px;top:543px;color:#111;font-weight:bold;">19 - Education (10 IFC Spaces)</div>
<svg style="left:0;top:0" width="1" height="1"><path d="M821.5 558.6 Q823 560.4 825 560.4 H1359.5 Q1361.5 560.4 1362.5 558.6" stroke="#e8542e" fill="none" stroke-width="1.3"/></svg>
<svg style="left:0;top:0" width="1" height="1"><circle cx="832.4" cy="576" r="9.2" stroke="#333" fill="#fff" stroke-width="1.1"/><path d="M829.2 574.7 L832.4 578.3 L836 574.7" stroke="#222" fill="none" stroke-width="1.8"/></svg>
<svg style="left:0;top:0" width="1" height="1"><rect x="847.6" y="569.6" width="12.6" height="11.9" stroke="#4a4a4a" fill="#fff" stroke-width="1.2"/><path d="M849.5 575.5 L853 578.8 L858 571.6" stroke="#111" fill="none" stroke-width="1.9"/></svg>
<div class="t" style="left:867px;top:570px;color:#111;font-weight:bold;">22 - Building 22 (will be created) (89 IFC Spaces)</div>
<svg style="left:0;top:0" width="1" height="1"><path d="M821.5 585.6 Q823 587.4 825 587.4 H1359.5 Q1361.5 587.4 1362.5 585.6" stroke="#e8542e" fill="none" stroke-width="1.3"/></svg>
<div class="t" style="left:820px;top:865px;">Using Configuration:</div>
<div class="t" style="left:932px;top:865px;color:#1c6ad0;text-decoration:underline;">Room config</div>
<div class="a" style="left:1169px;top:863px;width:90px;height:20px;background:#e1e1e1;border:1px solid #7a7a7a"></div>
<div class="t" style="left:1014px;width:400px;text-align:center;top:867px;">Import Rooms</div>
<div class="a" style="left:1269px;top:863px;width:90px;height:20px;background:#e1e1e1;border:1px solid #7a7a7a"></div>
<div class="t" style="left:1114px;width:400px;text-align:center;top:867px;">Cancel</div>
<div class="a" style="left:534px;top:92px;width:40px;height:40px;border-radius:50%;background:#fb4141;box-shadow:2px 3px 5px rgba(0,0,0,0.45)"></div><svg style="left:0;top:0" width="1" height="1"><path d="M554.2 101.9 H557.1 V123.1 H554.2 V106.2 Q552 108.6 548.8 109.7 V107 Q552.2 105.5 554.2 101.9 Z" fill="#fff"/></svg>
<div class="a" style="left:888px;top:343px;width:40px;height:40px;border-radius:50%;background:#fb4141;box-shadow:2px 3px 5px rgba(0,0,0,0.45)"></div><div class="t" style="left:888px;top:347px;width:40px;text-align:center;line-height:32px;font-size:29px;color:#fff">2</div>
<div class="a" style="left:1011px;top:850px;width:40px;height:40px;border-radius:50%;background:#fb4141;box-shadow:2px 3px 5px rgba(0,0,0,0.45)"></div><div class="t" style="left:1011px;top:854px;width:40px;text-align:center;line-height:32px;font-size:29px;color:#fff">3</div>
<div class="a" style="left:1128px;top:850px;width:40px;height:40px;border-radius:50%;background:#fb4141;box-shadow:2px 3px 5px rgba(0,0,0,0.45)"></div><div class="t" style="left:1128px;top:854px;width:40px;text-align:center;line-height:32px;font-size:29px;color:#fff">4</div>
</body></html>
